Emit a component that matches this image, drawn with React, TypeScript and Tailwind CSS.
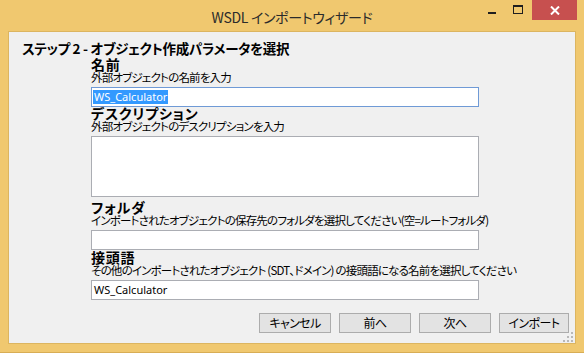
import React from "react";

const font = "font-['Noto_Sans_CJK_JP','Noto_Sans_CJK_SC',sans-serif] [font-feature-settings:'palt']";

function Field({ label, sub, h = 20, value, selected, focused, mt = 0 }: { label: string; sub: string; h?: number; value?: string; selected?: boolean; focused?: boolean; mt?: number }) {
  return (
    <div style={{ marginTop: mt }} className="flex flex-col">
      <div className="h-[14px] leading-[14px] text-[14px] tracking-[0.8px] font-bold text-black whitespace-nowrap">{label}</div>
      <div className="h-[12px] leading-[12px] text-[11.5px] tracking-[-0.8px] text-black whitespace-nowrap">{sub}</div>
      <div
        style={{ height: h }}
        className={`mt-[4px] w-[388px] bg-white border ${focused ? "border-[#6f9ad6]" : "border-[#abadb3]"} flex items-start`}
      >
        {value && (
          <span
            className={`mt-[2px] ml-[1px] px-[1px] text-[11px] leading-[14px] font-['Noto_Sans','Liberation_Sans',sans-serif] ${selected ? "bg-[#3399ff] text-white" : "text-black"}`}
          >
            {value}
          </span>
        )}
      </div>
    </div>
  );
}

function Btn({ children, w }: { children: React.ReactNode; w: number }) {
  return (
    <div
      style={{ width: w }}
      className="h-[20px] bg-[#e3e3e3] border border-[#acacac] flex items-center justify-center text-[12px] tracking-[-0.6px] leading-[12px] text-black"
    >
      {children}
    </div>
  );
}

export default function App() {
  return (
    <div className={`w-[584px] h-[353px] bg-[#f0c86f] flex flex-col ${font}`}>
      {/* title bar */}
      <div className="h-[31px] grid grid-cols-[1fr_auto_1fr]">
        <div />
        <div className="text-[14px] leading-[14px] tracking-[-0.3px] text-[#2b2b2b] pt-[10px] whitespace-nowrap">WSDL インポートウィザード</div>
        <div className="flex justify-end items-start pr-[7px]">
          <div className="w-[26px] h-[20px] flex items-center justify-center">
            <div className="w-[8px] h-[2px] bg-[#1f1f1f] mt-[6px] -ml-[2px]" />
          </div>
          <div className="w-[26px] h-[20px] flex items-center justify-center">
            <div className="w-[10px] h-[9px] border border-[#1f1f1f] border-t-[2px] -mt-[1px] -ml-[2px]" />
          </div>
          <div className="w-[45px] h-[20px] bg-[#c7504f] flex items-center justify-center">
            <svg width="10" height="9" viewBox="0 0 10 9">
              <path d="M1 0.5 L9 8.5 M9 0.5 L1 8.5" stroke="white" strokeWidth="2" />
            </svg>
          </div>
        </div>
      </div>
      {/* client */}
      <div className="relative mx-[8px] h-[313px] bg-[#f0f0f0] border border-[#dcb560] flex flex-col">
        <div className="pt-[8px] pl-[13px] h-[16px] leading-[16px] text-[13.5px] tracking-[-0.3px] font-bold text-black whitespace-pre box-content">
          {"ステップ 2 - オブジェクト作成パラメータを選択"}
        </div>
        <div className="pl-[82px] flex flex-col">
          <Field mt={1} label="名前" sub="外部オブジェクトの名前を入力" value="WS_Calculator" selected focused />
          <Field mt={-1} label="デスクリプション" sub="外部オブジェクトのデスクリプションを入力" h={61} />
          <Field mt={3} label="フォルダ" sub="インポートされたオブジェクトの保存先のフォルダを選択してください(空=ルートフォルダ)" />
          <Field mt={0} label="接頭語" sub="その他のインポートされたオブジェクト (SDT、ドメイン) の接頭語になる名前を選択してください" value="WS_Calculator" />
        </div>
        <div className="mt-[13px] flex justify-end pr-[6px] gap-[8px]">
          <Btn w={72}>キャンセル</Btn>
          <Btn w={72}>前へ</Btn>
          <Btn w={72}>次へ</Btn>
          <Btn w={70}>インポート</Btn>
        </div>
        <svg className="absolute right-[2px] bottom-[1px]" width="10" height="10" viewBox="0 0 10 10">
          <g fill="#b8b8b8">
            <rect x="8" y="0" width="2" height="2" />
            <rect x="4" y="4" width="2" height="2" />
            <rect x="8" y="4" width="2" height="2" />
            <rect x="0" y="8" width="2" height="2" />
            <rect x="4" y="8" width="2" height="2" />
            <rect x="8" y="8" width="2" height="2" />
          </g>
        </svg>
      </div>
      <div className="flex-1 border-b border-[#d8ad55]" />
    </div>
  );
}
